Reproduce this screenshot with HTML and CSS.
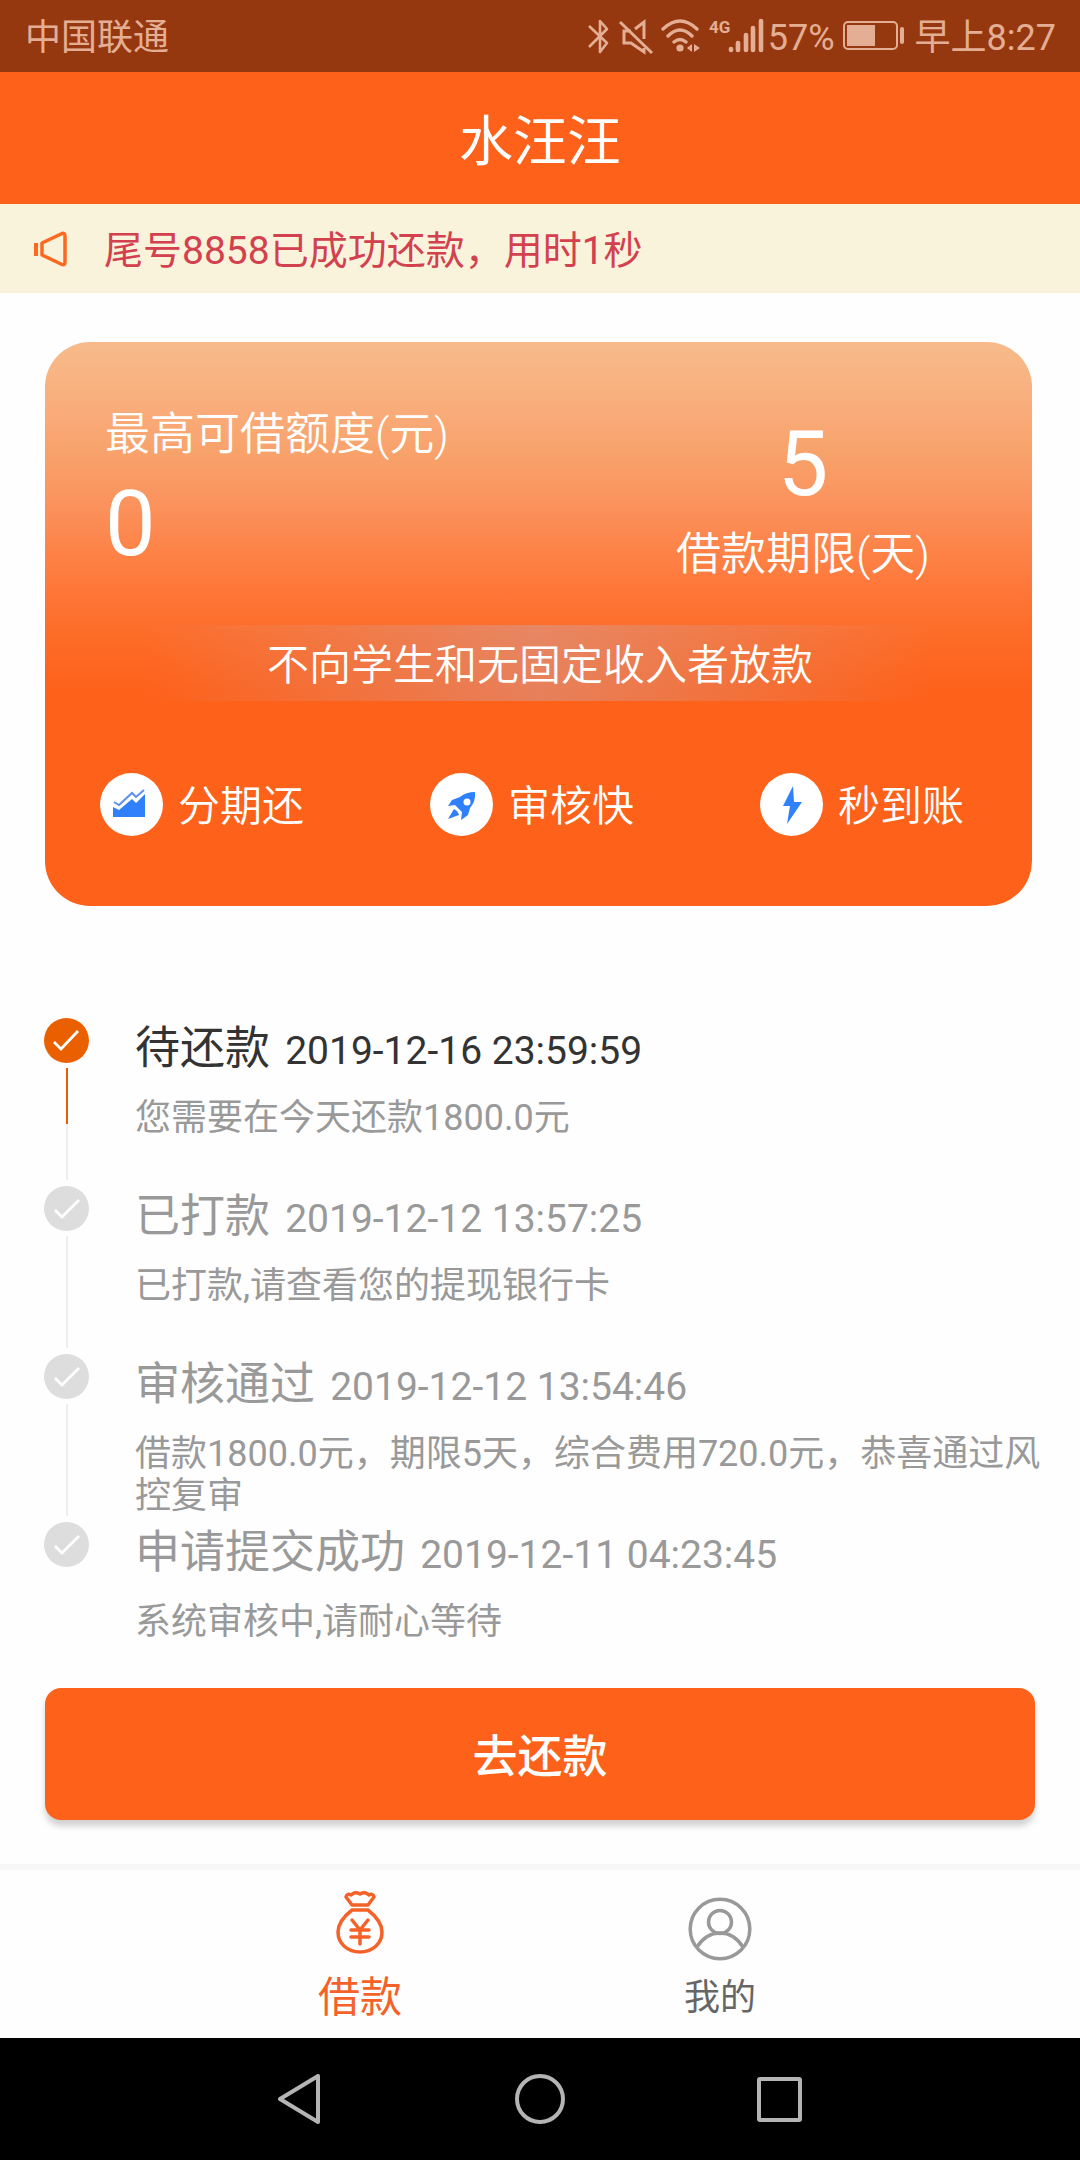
FILE: index.html
```html
<!DOCTYPE html>
<html lang="zh-CN">
<head>
<meta charset="utf-8">
<meta name="viewport" content="width=device-width, initial-scale=1">
<title>水汪汪</title>
<link rel="stylesheet" href="styles.css">
</head>
<body>
<div class="app">
  <div class="status">
    <span>中国联通</span>
    <div class="status-right">
      <svg width="182" height="40" viewBox="0 0 182 40" fill="none" stroke="currentColor" stroke-width="2.6" aria-hidden="true">
        <path d="M3 8L21 25L14 34V3L21 11L3 29" stroke-linejoin="round"/>
        <path d="M34 4L66 35" stroke-width="3"/>
        <path d="M49 11L58 4V21M45 13H38V25H45L58 34V30" stroke-width="3"/>
        <path d="M77 11Q94-5 111 11M82 18Q94 6 106 18M88 24Q94 19 100 24" stroke-width="3.4" stroke-linecap="round"/>
        <circle cx="94" cy="30" r="3.6" fill="currentColor" stroke="none"/>
        <path d="M106 26V34L101 30ZM108 26V34L114 30Z" fill="currentColor" stroke="none"/>
        <path d="M145 31V32M152 25V32M160 17V32M167 10V32M175 3V32" stroke-width="4.6" stroke-linecap="round"/>
        <text class="net-label" x="123" y="15">4G</text>
      </svg>
      <span>57%</span>
      <svg class="battery" width="62" height="30" viewBox="0 0 62 30" fill="none" stroke="currentColor" aria-hidden="true">
        <rect x="1" y="1" width="53" height="27" rx="4" stroke-width="2"/>
        <rect x="4" y="4" width="28" height="21" fill="currentColor" stroke="none"/>
        <path d="M59 8V21" stroke-width="4" stroke-linecap="round"/>
      </svg>
      <span>早上8:27</span>
    </div>
  </div>

  <header class="header"><h1>水汪汪</h1></header>

  <div class="notice">
    <svg width="36" height="38" viewBox="0 0 36 38" fill="none" stroke="currentColor" stroke-width="3.5" stroke-linejoin="round" aria-hidden="true">
      <path d="M2 13V26" stroke-width="4"/>
      <path d="M8 13V25L27 34Q31 36 31 32V6Q31 2 27 4Z"/>
    </svg>
    <p>尾号8858已成功还款，用时1秒</p>
  </div>

  <main class="main">
    <section class="card">
      <div class="quota">
        <div class="amount">
          <p class="label">最高可借额度(元)</p>
          <p class="figure">0</p>
        </div>
        <div class="term">
          <p class="figure">5</p>
          <p class="label">借款期限(天)</p>
        </div>
      </div>
      <p class="banner">不向学生和无固定收入者放款</p>
      <ul class="features">
        <li>
          <svg width="63" height="63" viewBox="0 0 63 63" aria-hidden="true">
            <circle cx="31.500" cy="31.500" r="31.500" fill="#fff"/>
            <path d="M13 34L19 37L32 26L36 30L45 21V44H13Z" fill="#2f80fa"/>
            <path d="M14 29L19 32L32 20L36 24L44 17" fill="none" stroke="#5d8ff0" stroke-width="2"/>
          </svg>
          <span>分期还</span>
        </li>
        <li>
          <svg width="63" height="63" viewBox="0 0 63 63" aria-hidden="true">
            <circle cx="31.500" cy="31.500" r="31.500" fill="#fff"/>
            <path d="M45 19Q36 19 30 24L22 27L18 33L25 32L32 39L31 47L38 42L40 35Q46 28 45 19Z" fill="#2f80fa"/>
            <path d="M24 36L18 46L29 42Q28 38 24 36Z" fill="#2f80fa"/>
            <circle cx="37" cy="29" r="3.500" fill="#fff"/>
          </svg>
          <span>审核快</span>
        </li>
        <li>
          <svg width="63" height="63" viewBox="0 0 63 63" aria-hidden="true">
            <circle cx="31.500" cy="31.500" r="31.500" fill="#fff"/>
            <path d="M33 13L23 33H30L27 51L42 29H34Z" fill="#2f80fa"/>
          </svg>
          <span>秒到账</span>
        </li>
      </ul>
    </section>

    <ol class="steps">
      <li class="step active">
        <div class="rail">
          <svg width="45" height="45" viewBox="0 0 45 45" aria-hidden="true"><circle cx="22.500" cy="22.500" r="22.500" fill="currentColor"/><path d="M10 24L17 31L34 13" fill="none" stroke="#fff" stroke-width="2.800"/></svg>
          <span class="line"></span>
        </div>
        <div class="body">
          <h2>待还款 <time>2019-12-16 23:59:59</time></h2>
          <p>您需要在今天还款1800.0元</p>
        </div>
      </li>
      <li class="step">
        <div class="rail">
          <svg width="45" height="45" viewBox="0 0 45 45" aria-hidden="true"><circle cx="22.500" cy="22.500" r="22.500" fill="currentColor"/><path d="M11 24L18 31L35 14" fill="none" stroke="#fff" stroke-width="2.800"/></svg>
          <span class="line"></span>
        </div>
        <div class="body">
          <h2>已打款 <time>2019-12-12 13:57:25</time></h2>
          <p>已打款,请查看您的提现银行卡</p>
        </div>
      </li>
      <li class="step">
        <div class="rail">
          <svg width="45" height="45" viewBox="0 0 45 45" aria-hidden="true"><circle cx="22.500" cy="22.500" r="22.500" fill="currentColor"/><path d="M11 24L18 31L35 14" fill="none" stroke="#fff" stroke-width="2.800"/></svg>
          <span class="line"></span>
        </div>
        <div class="body">
          <h2>审核通过 <time>2019-12-12 13:54:46</time></h2>
          <p>借款1800.0元，期限5天，综合费用720.0元，恭喜通过风控复审</p>
        </div>
      </li>
      <li class="step">
        <div class="rail">
          <svg width="45" height="45" viewBox="0 0 45 45" aria-hidden="true"><circle cx="22.500" cy="22.500" r="22.500" fill="currentColor"/><path d="M11 24L18 31L35 14" fill="none" stroke="#fff" stroke-width="2.800"/></svg>
        </div>
        <div class="body">
          <h2>申请提交成功 <time>2019-12-11 04:23:45</time></h2>
          <p>系统审核中,请耐心等待</p>
        </div>
      </li>
    </ol>

    <button class="repay" type="button">去还款</button>
  </main>

  <nav class="tabs">
    <a class="tab current" href="#loan" aria-current="page">
      <svg width="64" height="64" viewBox="0 0 64 64" fill="none" stroke="currentColor" stroke-width="3.500" stroke-linejoin="round" stroke-linecap="round" aria-hidden="true">
        <path d="M24 14L18 6Q19 2 23 4Q27 0 32 3Q37 0 41 4Q45 2 46 6L40 14Z"/>
        <path d="M24 19H40Q54 30 54 41C54 53 44 61 32 61S10 53 10 41Q10 30 24 19Z"/>
        <path d="M24 29L32 39L40 29M23 39H41M23 46H41M32 39V53"/>
      </svg>
      <span>借款</span>
    </a>
    <a class="tab" href="#mine">
      <svg width="64" height="64" viewBox="0 0 64 64" fill="none" stroke="#999" stroke-width="3.500" aria-hidden="true">
        <circle cx="32" cy="32" r="29.800"/>
        <circle cx="32" cy="25" r="11.500"/>
        <path d="M9 50Q18 36 32 36T55 50"/>
      </svg>
      <span>我的</span>
    </a>
  </nav>

  <div class="system-nav">
    <button type="button" aria-label="返回"><svg width="50" height="50" viewBox="0 0 50 50"><path d="M5 25L43 2V48Z"/></svg></button>
    <button type="button" aria-label="主页"><svg width="50" height="50" viewBox="0 0 50 50"><circle cx="25" cy="25" r="23"/></svg></button>
    <button type="button" aria-label="最近任务"><svg width="50" height="50" viewBox="0 0 50 50"><rect x="4" y="5" width="41" height="41" rx="1"/></svg></button>
  </div>
</div>
</body>
</html>
```
FILE: styles.css
```css
* {
  box-sizing: border-box;
}

body,
h1,
h2,
p,
ul,
ol {
  margin: 0;
  padding: 0;
  font-weight: inherit;
}

ul,
ol {
  list-style: none;
}

svg {
  display: block;
  flex: none;
}

button {
  border: 0;
  padding: 0;
  font: inherit;
}

body {
  background: #fefefe;
  font-family: Roboto, "Noto Sans CJK SC", sans-serif;
  font-size: 36px;
  color: #999;
}

.app {
  display: flex;
  flex-direction: column;
  min-height: 100vh;
}

/* Status bar */
.status {
  display: flex;
  justify-content: space-between;
  align-items: center;
  height: 72px;
  padding: 4px 24px 0 25px;
  background: #96380f;
  color: #e4ae95;
  line-height: 42px;
}

.status-right {
  display: flex;
  align-items: center;
}

.battery {
  margin: 0 10px 4px 8px;
}

.net-label {
  fill: currentColor;
  stroke: none;
  font-size: 17px;
  font-weight: 700;
}

/* Title and notice */
.header {
  display: flex;
  align-items: center;
  justify-content: center;
  height: 132px;
  padding-bottom: 2px;
  background: #fe611a;
  color: #fff;
}

.header h1 {
  font-size: 54px;
}

.notice {
  display: flex;
  align-items: center;
  gap: 34px;
  height: 89px;
  padding: 0 34px;
  background: #f9f3dc;
  color: #fb6820;
}

.notice p {
  padding-bottom: 4px;
  font-size: 39px;
  color: #d3404e;
}

.main {
  flex: 1;
}

/* Credit card */
.card {
  margin: 49px 48px 0 45px;
  height: 564px;
  padding-top: 63px;
  border-radius: 45px;
  background: linear-gradient(#f7bb8b 0, #f9ae7d 60px, #f8a26b 110px, #fb935e 160px, #fd8348 208px, #fe7434 258px, #fd6b27 298px, #fe611a 350px);
  color: #fff;
  font-weight: 350;
}

.quota {
  display: flex;
  justify-content: space-between;
  height: 220px;
  padding: 0 102px 0 60px;
}

.label {
  font-size: 45px;
  line-height: 60px;
}

.figure {
  font-size: 90px;
  font-weight: 400;
  line-height: 120px;
}

.term {
  text-align: center;
}

.banner {
  height: 76px;
  padding-left: 3px;
  font-size: 42px;
  line-height: 82px;
  text-align: center;
  background: linear-gradient(90deg, #d0a09c00 10%, #d0a09c80 50%, #d0a09c00 90%);
}

.features {
  display: grid;
  grid-template-columns: repeat(3, 1fr);
  column-gap: 3px;
  margin-top: 72px;
}

.features li {
  display: flex;
  align-items: center;
  gap: 15px;
  padding-left: 55px;
  font-size: 42px;
  line-height: 59px;
}

.features span {
  padding-top: 4px;
}

/* Progress */
.steps {
  margin-top: 112px;
  padding: 0 36px 0 44px;
}

.step {
  display: flex;
  gap: 46px;
  min-height: 168px;
}

.rail {
  display: flex;
  flex: none;
  flex-direction: column;
  align-items: center;
  width: 45px;
  color: #ddd;
}

.line {
  flex: 1;
  width: 2px;
  margin: 5px 0 6px;
  background: #eee;
}

.active .rail {
  color: #ea6000;
}

.active .line {
  background: linear-gradient(#ea6000 50%, #eee 50%);
}

.body h2 {
  font-size: 45px;
  line-height: 62px;
}

.body time {
  margin-left: 4px;
  font-size: 39px;
}

.active h2 {
  color: #333;
}

.body p {
  margin-top: 15px;
  line-height: 42px;
}

.repay {
  display: block;
  width: calc(100% - 90px);
  height: 132px;
  margin: -2px 45px 44px;
  padding-bottom: 2px;
  border-radius: 16px;
  background: #fe611a;
  box-shadow: 0 6px 6px #0000002e;
  color: #fff;
  font-size: 45px;
  font-weight: 500;
}

/* Bottom tabs */
.tabs {
  display: flex;
  justify-content: center;
  height: 174px;
  border-top: 6px solid #f7f7f7;
}

.tab {
  display: flex;
  flex-direction: column;
  align-items: center;
  justify-content: flex-end;
  gap: 10px;
  width: 33.33%;
  padding-bottom: 13px;
  color: #666;
  line-height: 54px;
  text-decoration: none;
}

.current {
  gap: 16px;
  color: #f4622a;
  font-size: 42px;
}

.system-nav {
  display: flex;
  align-items: center;
  justify-content: center;
  gap: 190px;
  height: 122px;
  background: #000;
}

.system-nav button {
  background: none;
}

.system-nav svg {
  fill: none;
  stroke: #b4b4b4;
  stroke-width: 4;
  stroke-linejoin: round;
}
```
